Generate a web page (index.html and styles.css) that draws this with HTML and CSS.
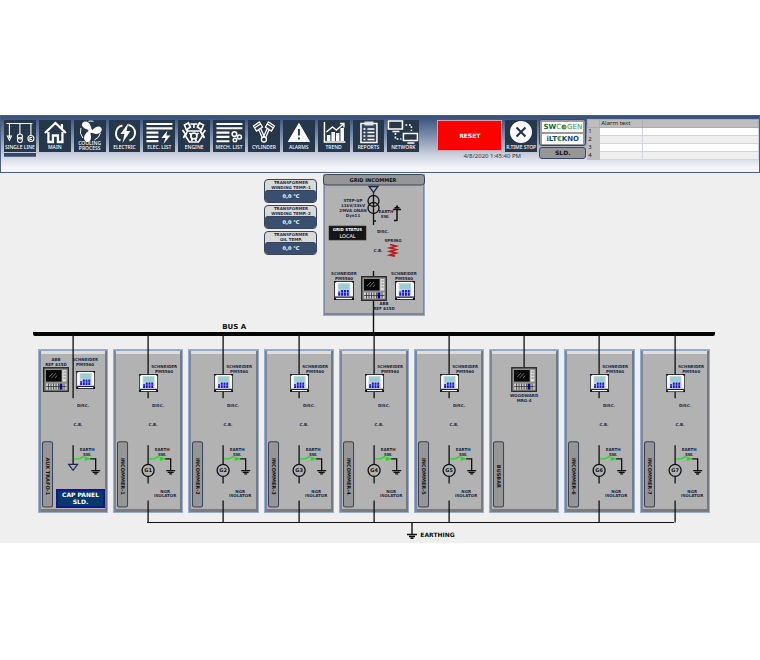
FILE: index.html
```html
<!DOCTYPE html>
<html lang="en">
<head>
<meta charset="utf-8">
<title>Single Line Diagram</title>
<link rel="stylesheet" href="styles.css">
</head>
<body>
<svg class="defs" aria-hidden="true">
  <symbol id="meter" viewBox="0 0 19 18">
    <rect x=".5" y=".5" width="18" height="17" rx="1" fill="#fff" stroke="#334" stroke-width="1"/>
    <path d="M0 0h2v1.500H0zM17 0h2v1.500h-2zM0 16h2v2H0zM17 16h2v2h-2z" fill="#111"/>
    <rect x="3.500" y="2" width="12" height="12" fill="#c3d3d8"/>
    <rect x="4.500" y="3" width="10" height="4.500" fill="#9acfcf"/>
    <path d="M5 10v4M7.700 8.500V14M10.400 8.500V14M13.100 8.500V14" stroke="#1515dd" stroke-width="1.900"/>
    <path d="M4 11h11" stroke="#aab4e8" stroke-width=".5"/>
    <path d="M1 15.300h17" stroke="#1c2050" stroke-width="1.300"/>
  </symbol>
  <symbol id="relay" viewBox="0 0 26 25">
    <rect x=".7" y=".7" width="24.600" height="23.600" fill="#8e8e8e" stroke="#2b2b2b" stroke-width="1.400"/>
    <rect x="3" y="3" width="15.500" height="11.500" fill="#080808"/>
    <path d="M6 10l4-4M8.500 11l4.500-5M12 11l2-2.500" stroke="#999" stroke-width=".7"/>
    <rect x="19.300" y="3" width="4" height="11.500" fill="#ddd"/>
    <path d="M20.500 5h2M20.500 8h2M20.500 11h2" stroke="#555" stroke-width=".8"/>
    <rect x="3" y="16.500" width="20.500" height="6" fill="#ccc"/>
    <path d="M3 19.500h20.500M5.500 16.500v6M8 16.500v6M10.500 16.500v6M13 16.500v6M15.500 16.500v6M21 16.500v6" stroke="#333" stroke-width=".8"/>
    <rect x="16.500" y="16.500" width="2.800" height="6" fill="#0c0c80"/>
  </symbol>
  <symbol id="earthsw" viewBox="0 0 30 22">
    <path d="M2 5.500h5l5-2.500M13 5.500h5" fill="none" stroke="#12e412" stroke-width="1.300"/>
    <path d="M13 3.800l4 1.700-4 1.700z" fill="#12e412" stroke="#12e412" stroke-width=".8"/>
    <path d="M18 5.500h5.500V17" fill="none" stroke="#111" stroke-width="1.300"/>
    <path d="M19 17.200h9M20.500 19h6M22 20.600h3" stroke="#111" stroke-width="1.300"/>
  </symbol>
</svg>
<main class="screen">
  <header class="toolbar">
    <nav class="nav" aria-label="Screens">
      <a class="tile active" href="#single"><svg viewBox="0 0 31 24"><g fill="none" stroke="#fff" stroke-width="1.100"><path d="M2 3.500h26M5 3.500V18M15.500 3.500V14M26.500 3.500V16M3 16l2 4.500L7 16z"/><circle cx="15.500" cy="16.500" r="2.500"/><circle cx="15.500" cy="20" r="2.500"/><circle cx="26.500" cy="18.500" r="3"/><path d="M27.500 17.500h-2v2h2"/></g></svg><span>SINGLE LINE</span></a>
      <a class="tile" href="#main"><svg viewBox="0 0 31 24"><path d="M5.500 13L16 3l10.500 10M22.500 9V4M9 12v10h4.500v-6.500h5V22H23V12" fill="none" stroke="#fff" stroke-width="2.300"/></svg><span>MAIN</span></a>
      <a class="tile" href="#cooling"><svg viewBox="0 0 31 24"><g fill="#fff"><circle cx="16" cy="11" r="2.200"/><path d="M14.500 10C10 9 6 6 8 3s8-2 9 6z"/><path d="M14.500 10C10 9 6 6 8 3s8-2 9 6z" transform="rotate(120 16 11)"/><path d="M14.500 10C10 9 6 6 8 3s8-2 9 6z" transform="rotate(240 16 11)"/></g><path d="M14 1.300a10 10 0 0 1 5 0M6.500 8a10 10 0 0 0 2 10M26 13a10 10 0 0 1-6 7" fill="none" stroke="#fff" stroke-width="1"/></svg><span class="two">COOLING<br>PROCESS</span></a>
      <a class="tile" href="#electric"><svg viewBox="0 0 31 24"><path d="M13 5.500a8 8 0 0 0-2 15M19 5a8 8 0 0 1 1 15.500" fill="none" stroke="#fff" stroke-width="2"/><path d="M19 3l-8 11h4l-2 9 8-12h-4z" fill="#fff"/></svg><span>ELECTRIC</span></a>
      <a class="tile" href="#elec-list"><svg viewBox="0 0 31 24"><path d="M3 4h26M3 8.300h26M3 12.600h12M3 16.900h12M3 21.200h12" stroke="#fff" stroke-width="2.200"/><path d="M24 10.500l-6 7.500h4l-2 6 7-8.500h-4z" fill="#fff"/></svg><span>ELEC. LIST</span></a>
      <a class="tile" href="#engine"><svg viewBox="0 0 31 24"><g fill="none" stroke="#fff" stroke-width="1.700"><path d="M12 4h7M15.500 4v4M6 5l4-2 2 4-4 3zM25 5l-4-2-2 4 4 3zM4 10l3 4-2 4M27 10l-3 4 2 4M9 11h13l2 5-4 6h-9l-4-6z"/><circle cx="15.500" cy="16" r="3"/><path d="M11 13l2 2M20 13l-2 2M13 21l1-2M18 21l-1-2"/></g></svg><span>ENGINE</span></a>
      <a class="tile" href="#mech-list"><svg viewBox="0 0 31 24"><path d="M3 4h26M3 8.300h26M3 12.600h13M3 16.900h13M3 21.200h13" stroke="#fff" stroke-width="2.100"/><g fill="none" stroke="#fff" stroke-width="1.600"><circle cx="21" cy="14" r="2.300"/><circle cx="26" cy="17" r="2"/><circle cx="21.500" cy="20" r="1.700"/></g></svg><span>MECH. LIST</span></a>
      <a class="tile" href="#cylinder"><svg viewBox="0 0 31 24"><g fill="none" stroke="#fff" stroke-width="1.300"><path d="M5 6l6-4 3 5-6 4zM6 8l6-4M26 6l-6-4-3 5 6 4zM25 8l-6-4M10 9l4 9M12 8l4 9M21 9l-4 9M19 8l-4 9"/><circle cx="15.500" cy="19.500" r="2.500"/></g></svg><span>CYLINDER</span></a>
      <a class="tile" href="#alarms"><svg viewBox="0 0 31 24"><path d="M15.500 3.500L26 21.500H5z" fill="#fff" stroke="#fff" stroke-linejoin="round"/><path d="M15.500 9v6.500M15.500 17.500v2" stroke="#26364b" stroke-width="1.900"/></svg><span>ALARMS</span></a>
      <a class="tile" href="#trend"><svg viewBox="0 0 31 24"><path d="M6 2v20h21" fill="none" stroke="#fff" stroke-width="1.500"/><path d="M8.500 21v-6H12v6zM13 21v-9h3.500v9zM17.500 21v-8H21v8zM22 21V8h3.500v13z" fill="#fff"/><path d="M8 12l6-5 4 3 7-6M21.500 3.500H25.500v4" fill="none" stroke="#fff" stroke-width="1.400"/></svg><span>TREND</span></a>
      <a class="tile" href="#reports"><svg viewBox="0 0 31 24"><path d="M7.500 3.500h16v19h-16z" fill="#34465d" stroke="#fff" stroke-width="1.500"/><path d="M11 1.500h9v4h-9z" fill="#dfe3e8"/><path d="M10 9h2M10 12.500h2M10 16h2M10 19.500h2M14 9h7M14 12.500h7M14 16h7M14 19.500h7" stroke="#fff" stroke-width="1.300"/></svg><span>REPORTS</span></a>
      <a class="tile" href="#network"><svg viewBox="0 0 31 24"><g fill="none" stroke="#fff" stroke-width="1.600"><path d="M1 1h14v8H1zM5 11.500h7M16 13.500h14v7H16zM20 23h7"/><path d="M18 5h6v6M8 13v6h6" stroke-dasharray="1.800 1.800"/></g></svg><span>NETWORK</span></a>
    </nav>
    <div class="actions">
      <div class="action-row">
        <button class="reset" type="button">RESET</button>
        <button class="tile stop" type="button"><svg viewBox="0 0 31 24"><circle cx="15.500" cy="12" r="11" fill="#fff"/><path d="M11 7.500l9 9M20 7.500l-9 9" stroke="#26364b" stroke-width="2.200"/></svg><span>R.TIME STOP</span></button>
      </div>
      <time class="clock">4/8/2020 1:45:40 PM</time>
    </div>
    <div class="brand">
      <div class="logos">
        <div class="logo swc"><b>SW</b>C<svg viewBox="0 0 6 6"><circle cx="3" cy="3" r="2.500" fill="#31964b"/><circle cx="3.500" cy="3" r="1.300" fill="#ef8a2c"/></svg>GEN</div>
        <div class="logo tek">iLT<i>€</i>KNO</div>
      </div>
      <button class="sld-btn" type="button">SLD.</button>
    </div>
    <table class="alarms">
      <thead><tr><th class="num"></th><th class="txt">Alarm text</th><th></th></tr></thead>
      <tbody>
        <tr><th class="num">1</th><td></td><td></td></tr>
        <tr><th class="num">2</th><td></td><td></td></tr>
        <tr><th class="num">3</th><td></td><td></td></tr>
        <tr><th class="num">4</th><td></td><td></td></tr>
      </tbody>
    </table>
  </header>

  <section class="supply">
    <div class="readings">
      <div class="reading"><span>TRANSFORMER<br>WINDING TEMP.-1</span><output>0,0 °C</output></div>
      <div class="reading"><span>TRANSFORMER<br>WINDING TEMP.-2</span><output>0,0 °C</output></div>
      <div class="reading"><span>TRANSFORMER<br>OIL TEMP.</span><output>0,0 °C</output></div>
    </div>
    <div class="grid-panel">
      <svg class="draw" viewBox="0 0 102 142">
        <rect x=".5" y=".5" width="101" height="10.500" rx="3" fill="#969696" stroke="#3b4258"/>
        <text class="t5" x="50" y="7.500">GRID INCOMMER</text>
        <g fill="none" stroke="#222a48" stroke-width="1.300">
          <path d="M46 12.500h9l-4.500 6z"/><path d="M50.500 18v4"/>
          <g stroke="#111"><circle cx="50.500" cy="27" r="5.500"/><circle cx="50.500" cy="34" r="5.500"/><path d="M50.500 22v29M50.500 47h2.500"/>
          <path d="M74 46.500h-3M74 47V35M70 35.500h8M71.500 33.800h5M73 32.300h2" stroke-width="1.500"/></g>
        </g>
        <text x="30" y="28">STEP-UP</text><text x="30" y="33">11kV/33kV</text><text x="30" y="38">2MVA ONAN</text><text x="30" y="43">Dyn11</text>
        <text x="63" y="39">EARTH</text><text x="62" y="44">SW.</text>
        <rect x="6" y="52" width="37" height="14" fill="#151515" stroke="#333" stroke-width=".6"/>
        <text class="white" x="24.500" y="57">GRID STATUS</text><text class="white t5 regular" x="24.500" y="64">LOCAL</text>
        <text x="60" y="59">DISC.</text><text x="70" y="68">SPRING</text><text x="55" y="78">C.B.</text>
        <path d="M67 70.500l6 1.500-6 2 6 1.500-6 2 6 1.500-6 2 5 1" fill="none" stroke="#b81c1c" stroke-width="1.800"/>
        <path d="M50.500 97v63" stroke="#111" stroke-width="1.400"/>
        <use href="#relay" x="38" y="102" width="26" height="25"/>
        <use href="#meter" x="11" y="107" width="20" height="19"/>
        <use href="#meter" x="72" y="107" width="20" height="19"/>
        <text x="21" y="101">SCHNEIDER</text><text x="21" y="106">PM5560</text>
        <text x="81" y="101">SCHNEIDER</text><text x="81" y="106">PM5560</text>
        <text x="61" y="131">ABB</text><text x="61" y="136">REF 615D</text>
      </svg>
    </div>
  </section>

  <section class="bus"><h2>BUS A</h2></section>

  <section class="bays" id="bays"></section>

  <section class="earth">
    <svg viewBox="0 0 10 16"><path d="M5 0v11M0 11.500h10M2 13.500h6M3.500 15.300h3" stroke="#111" stroke-width="1.400"/></svg>
    <span>EARTHING</span>
  </section>
</main>
<script src="app.js"></script>
</body>
</html>
```
FILE: app.js
```js
const text = (x, y, s, cls = "") => `<text class="${cls}" x="${x}" y="${y}">${s}</text>`;

const switchgear =
  text(45, 58, "DISC.") + text(40, 77, "C.B.") +
  text(49, 102, "EARTH") + text(49, 107, "SW.") +
  `<use href="#earthsw" x="34" y="104" width="30" height="22"/>`;

const kinds = {
  aux: () =>
    `<path class="wire" d="M35 -15V49M35 96v19"/>
     <use href="#relay" x="5" y="18" width="26" height="25"/>
     <use href="#meter" x="38" y="22" width="19" height="18"/>` +
    text(18, 12, "ABB") + text(18, 17, "REF 615D") +
    text(47, 12, "SCHNEIDER") + text(47, 17, "PM5560") + switchgear +
    `<path class="load" d="M30.500 115h9l-4.500 6z"/>`,
  incomer: (n) =>
    `<path class="wire" d="M35 -15V49M35 96v38M35 151v22"/>
     <use href="#meter" x="26" y="25" width="19" height="18"/>` +
    text(51, 19, "SCHNEIDER") + text(51, 24, "PM5560") + switchgear +
    `<circle class="gen" cx="35" cy="121" r="6"/>` + text(35, 123, "G" + n, "t5") +
    text(52, 144, "NGR") + text(52, 148, "ISOLATOR"),
  busbar: () =>
    `<path class="wire" d="M35 -15V20"/>
     <use href="#relay" x="22" y="18" width="26" height="25"/>` +
    text(35, 48, "WOODWARD") + text(35, 53, "MRG-4"),
};

const bays = [
  { kind: "aux", name: "AUX TRAFO-1" },
  ...[1, 2, 3, 4, 5].map((n) => ({ kind: "incomer", name: "INCOMMER-" + n, n })),
  { kind: "busbar", name: "BUSBAR" },
  ...[6, 7].map((n) => ({ kind: "incomer", name: "INCOMMER-" + n, n })),
];

document.getElementById("bays").innerHTML = bays.map((bay) => `
  <article class="bay">
    <svg class="draw" viewBox="0 0 70 163">
      ${kinds[bay.kind](bay.n)}
      <rect class="tag" x="4.5" y="92.5" width="10" height="65" rx="2"/>
      <text class="t5" transform="translate(8 127) rotate(90)">${bay.name}</text>
    </svg>
    ${bay.kind === "aux" ? '<button class="cap" type="button">CAP PANEL<br>SLD.</button>' : ""}
  </article>`).join("");
```
FILE: styles.css
```css
* { box-sizing: border-box; }
body {
  margin: 0;
  padding-top: 115px;
  background: #fff;
  color: #111;
  font-family: "DejaVu Sans", sans-serif;
}
button { font: inherit; padding: 0; margin: 0; cursor: pointer; }
a { color: inherit; text-decoration: none; }
.defs { position: absolute; width: 0; height: 0; }
.screen { background: #efefef; padding-bottom: 4px; }

.toolbar {
  display: flex;
  align-items: flex-start;
  height: 58px;
  padding: 3px 0 0 3px;
  border: 1px solid #4c5f83;
  background: linear-gradient(#344f7a 0%, #7c8cac 35%, #ccd2df 70%, #f4f5f8 92%);
}
.nav {
  display: grid;
  grid-template-columns: repeat(12, 1fr);
  gap: 3px;
  flex: 0 0 55%;
  padding-top: 1px;
}
.tile {
  position: relative;
  display: flex;
  flex-direction: column;
  align-items: center;
  justify-content: space-between;
  height: 32px;
  padding-bottom: 1px;
  border: 0;
  background: #26364b;
  color: #fff;
  font: 500 5px/7px "Noto Sans", sans-serif;
  text-align: center;
  white-space: nowrap;
}
.tile svg { display: block; width: 100%; height: 24px; }
.tile .two { margin-top: -4px; line-height: 5px; }
.active::after {
  content: "";
  position: absolute;
  top: 32px;
  left: 0;
  width: 100%;
  height: 3px;
  border-top: 1px solid #c6cddb;
  border-bottom: 1px solid #5d6d8c;
  background: #34466a;
}
.actions { flex: 0 0 100px; margin-left: 18px; padding-top: 1px; }
.action-row { display: flex; gap: 3px; }
.reset {
  flex: 0 0 65px;
  height: 31px;
  border: 1px solid #d9a0a8;
  background: #f00;
  color: #fff;
  font-size: 6px;
  font-weight: bold;
}
.stop { flex: 1; }
.clock {
  display: block;
  padding-left: 10px;
  color: #333;
  font: 6px/8px "Noto Sans", sans-serif;
  text-align: center;
}
.brand { flex: 0 0 47px; margin-left: 2px; }
.logos {
  display: grid;
  gap: 2px;
  height: 27px;
  padding: 2px;
  border: 1px solid #3a4560;
  border-radius: 3px;
  background: #9a9a9a;
}
.logo {
  display: flex;
  align-items: center;
  justify-content: center;
  background: #fff;
  color: #2f9350;
  font: 7px/10px "DejaVu Sans", sans-serif;
}
.swc b { color: #176a35; }
.swc svg { width: 6px; height: 6px; }
.tek { color: #1d4a86; font-weight: bold; }
.tek i { color: #3c9a50; font-style: normal; }
.sld-btn {
  display: block;
  width: 100%;
  height: 12px;
  margin-top: 1px;
  border: 1px solid #3a4560;
  border-radius: 3px;
  background: #969696;
  color: #111;
  font: bold 6px/8px "DejaVu Sans", sans-serif;
}
.alarms {
  flex: 1;
  height: 41px;
  margin-left: 1px;
  border-collapse: collapse;
  table-layout: fixed;
  background: #fff;
  font: 6px/7px "Noto Sans", sans-serif;
  color: #222;
}
.alarms th, .alarms td { height: 8px; padding: 0 1px; border: 1px solid #d2d6dc; font-weight: normal; text-align: left; }
.alarms thead th { background: #bebebe; border-color: #adadad; }
.alarms tbody .num { background: #bebebe; border-color: #bebebe; }
.alarms .num { width: 12px; padding: 0; text-align: left; }
.alarms .txt { width: 43px; }
.alarms tr:nth-child(even) td { background: #efefef; }

.supply {
  display: flex;
  align-items: flex-start;
  gap: 6px;
  padding: 1px 0 0 34.8%;
}
.readings { display: grid; gap: 2px; flex: 0 0 53px; padding-top: 5px; }
.reading {
  display: grid;
  border: 1px solid #39435a;
  border-radius: 4px;
  background: #d9d9d9;
  font-size: 4px;
  font-weight: bold;
  line-height: 5px;
  text-align: center;
  color: #222a3e;
  white-space: nowrap;
}
.reading output {
  border-top: 1px solid #39435a;
  border-radius: 3px;
  background: #3a4f70;
  color: #fff;
  font-size: 5px;
  line-height: 11px;
}
.grid-panel, .bay {
  position: relative;
  background: #b2b2b2;
  box-shadow:
    inset 0 0 0 1px #9aaccb,
    inset 0 2px #93a6c4,
    inset 3px 0 #7c8799,
    inset -3px 0 #737985,
    inset 0 5px #dedede,
    inset 0 -4px #7c7c7c;
}
.grid-panel {
  flex: 0 0 102px;
  box-shadow: inset 0 0 0 1px #9aaccb, inset 2px 0 #7c8799, inset -2px 0 #7c8799, inset 0 -3px #7c8799;
}
.draw { display: block; width: 100%; overflow: visible; }
.draw text { fill: #20263c; font-size: 4px; font-weight: bold; text-anchor: middle; }
.draw .t5 { font-size: 5px; fill: #111; }
.draw .white { fill: #fff; }
.draw .regular { font-weight: normal; }
.wire { fill: none; stroke: #111; stroke-width: 1.3; }
.gen { fill: #b2b2b2; stroke: #111; stroke-width: 1.3; }
.load { fill: #b2b2b2; stroke: #222a48; stroke-width: 1.2; }
.tag { fill: #969696; stroke: #3b4258; stroke-width: 1; }

.bus { margin: 7px 5.9% 0 4.4%; border-bottom: 4px solid #050505; border-radius: 2px; }
.bus h2 { margin: 0; padding-left: 27.7%; font-size: 7px; line-height: 9px; }

.bays {
  display: grid;
  grid-template-columns: repeat(9, 1fr);
  gap: 5px;
  padding: 13px 6.6% 0 5%;
}
.cap {
  position: absolute;
  left: 26%;
  right: 5%;
  bottom: 3%;
  height: 19px;
  border: 1px solid #14148c;
  outline: 1px solid #14148c;
  outline-offset: -2px;
  background: #063a6c;
  color: #fff;
  font-size: 6px;
  font-weight: bold;
  line-height: 7px;
  white-space: nowrap;
}
.earth {
  display: flex;
  gap: 3px;
  margin: 9px 11.3% 0 19.4%;
  padding-left: 34.2%;
  border-top: 1px solid #111;
  font-size: 6px;
  font-weight: bold;
  line-height: 8px;
}
.earth svg { width: 10px; height: 16px; }
.earth span { padding-top: 8px; }
```
